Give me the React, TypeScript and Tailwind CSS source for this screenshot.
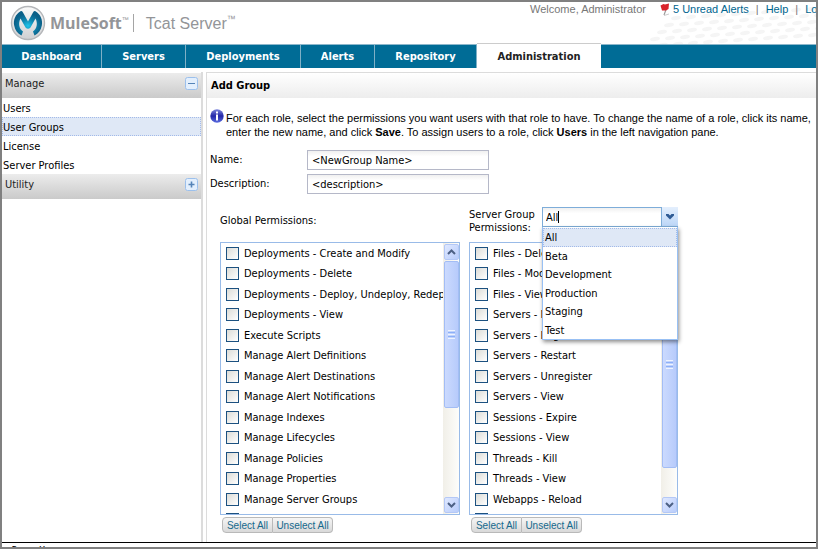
import type { ReactNode } from "react";

const tahoma = "font-['DejaVu_Sans_Condensed','DejaVu_Sans',sans-serif]";
const arial = "font-['Liberation_Sans',Arial,sans-serif]";

const tabs = [
  { name: "Dashboard", width: "w-[100px]" },
  { name: "Servers", width: "w-[84px]" },
  { name: "Deployments", width: "w-[115px]" },
  { name: "Alerts", width: "w-[74px]" },
  { name: "Repository", width: "w-[102px]" },
];

const globalPermissions = [
  "Deployments - Create and Modify",
  "Deployments - Delete",
  "Deployments - Deploy, Undeploy, Redep",
  "Deployments - View",
  "Execute Scripts",
  "Manage Alert Definitions",
  "Manage Alert Destinations",
  "Manage Alert Notifications",
  "Manage Indexes",
  "Manage Lifecycles",
  "Manage Policies",
  "Manage Properties",
  "Manage Server Groups",
  "",
];

const serverPermissions = [
  "Files - Delete",
  "Files - Modify",
  "Files - View",
  "Servers - Modify",
  "Servers - Register",
  "Servers - Restart",
  "Servers - Unregister",
  "Servers - View",
  "Sessions - Expire",
  "Sessions - View",
  "Threads - Kill",
  "Threads - View",
  "Webapps - Reload",
  "",
];

const serverGroups = ["All", "Beta", "Development", "Production", "Staging", "Test"];

function Logo() {
  return (
    <svg viewBox="0 0 36 36" className="size-9 shrink-0" aria-label="MuleSoft logo">
      <defs>
        <linearGradient id="rim" x1="0" y1="0" x2="0" y2="1">
          <stop offset="0" stopColor="#fafafa" />
          <stop offset="1" stopColor="#cfd0d2" />
        </linearGradient>
        <radialGradient id="ink" cx="0.5" cy="0.6" r="0.5">
          <stop offset="0" stopColor="#1fc4ea" />
          <stop offset="0.5" stopColor="#0f86b0" />
          <stop offset="1" stopColor="#0b6088" />
        </radialGradient>
      </defs>
      <circle cx="18" cy="18" r="16.5" fill="url(#rim)" stroke="#b4b6b9" strokeWidth="1.4" />
      <path
        d="M10.500 6.200C5.500 9 3 15 4.200 20.500C5 25 7.500 28.500 11.500 30.500L13 26.500C9 23.500 8 18.500 10.500 13.500L15.500 22.500Q18 25 20.500 22.500L25.500 13.500C28 18.500 27 23.500 23 26.500L24.500 30.500C28.500 28.500 31 25 31.800 20.500C33 15 30.500 9 25.500 6.200Q24 5.800 23 7.500L18 16.500L13 7.500Q12 5.800 10.500 6.200Z"
        fill="url(#ink)"
      />
    </svg>
  );
}

function Flag() {
  return (
    <svg viewBox="0 0 10 13" className="mr-[3px] h-[13px] w-[10px]" aria-hidden="true">
      <path d="M7 4L4 12" stroke="#999" strokeWidth="1.200" />
      <path d="M4 12.500L9 11" stroke="#ccc" strokeWidth="1" />
      <path d="M0.500 2.500L3.500 1L5 1.500L9 0.500L8.500 6L6 7.500L2 7.500Z" fill="#d8232a" />
    </svg>
  );
}

function InfoIcon() {
  return (
    <svg viewBox="0 0 14 14" className="size-[14px] shrink-0" aria-hidden="true">
      <defs>
        <linearGradient id="info" x1="0" y1="0" x2="0" y2="1">
          <stop offset="0" stopColor="#7d86dc" />
          <stop offset="0.5" stopColor="#2327a8" />
          <stop offset="1" stopColor="#5b6ce0" />
        </linearGradient>
      </defs>
      <circle cx="7" cy="7" r="6.700" fill="url(#info)" />
      <rect x="6" y="2.500" width="2" height="2" fill="#fff" />
      <rect x="6" y="5.500" width="2" height="6" fill="#fff" />
    </svg>
  );
}

function SectionHeader({ title, open }: { title: string; open: boolean }) {
  return (
    <h2>
      <button
        type="button"
        aria-expanded={open}
        className="flex h-[25px] w-full items-start justify-between bg-linear-to-b from-[#ececec] to-[#cacaca] pt-[3px] pr-[3px] pl-[3px] text-left text-[#222]"
      >
        <span className="leading-[15px]">{title}</span>
        <svg viewBox="0 0 13 13" className="mt-px size-[13px]" aria-hidden="true">
          <rect x="0.5" y="0.5" width="12" height="12" rx="2" fill="#e3effd" stroke="#9cc0ec" />
          <path d={open ? "M3 6.500H10" : "M3.500 6.500H9.500M6.500 3.500V9.500"} stroke="#5584b8" strokeWidth={open ? 1 : 1.6} />
        </svg>
      </button>
    </h2>
  );
}

function ScrollArrow({ up }: { up?: boolean }) {
  return (
    <button
      type="button"
      aria-label={up ? "Scroll up" : "Scroll down"}
      className="flex h-4 w-full shrink-0 items-center justify-center rounded-xs border border-[#b4c8f6] bg-linear-to-br from-[#dfe8ff] to-[#b9cdfb]"
    >
      <svg viewBox="0 0 9 6" className="h-[6px] w-[9px]" aria-hidden="true">
        <path d={up ? "M1 5L4.500 1.500L8 5" : "M1 1L4.500 4.500L8 1"} fill="none" stroke="#4d6185" strokeWidth="2" />
      </svg>
    </button>
  );
}

function PermissionList({ id, items, thumb }: { id: string; items: string[]; thumb: string }) {
  return (
    <div className="flex h-[273px] border border-[#99bbe8] bg-white">
      <ul className="min-w-0 flex-1 overflow-hidden pl-[5px]">
        {items.map((item, i) => (
          <li key={item} className="flex items-center odd:h-5 even:h-[21px]">
            <input
              id={`${id}-${i}`}
              type="checkbox"
              className="size-[13px] shrink-0 appearance-none border border-[#1c5180] bg-linear-to-br from-[#dcdcd7] to-white"
            />
            <label htmlFor={`${id}-${i}`} className="ml-[5px] whitespace-nowrap">
              {item}
            </label>
          </li>
        ))}
      </ul>
      <div className="flex w-4 shrink-0 flex-col bg-linear-to-r from-[#f1efe8] to-[#fdfdfb] py-px pl-px">
        <ScrollArrow up />
        <div className="flex-1 pt-px">
          <div
            className={`flex flex-col items-center justify-center gap-px rounded-xs border border-[#a3bdf5] bg-linear-to-r from-[#cbdafe] to-[#b7cbfb] ${thumb}`}
          >
            <i className="h-px w-[7px] bg-[#eef4fe]" />
            <i className="h-px w-[7px] bg-[#8cb0f8]" />
            <i className="h-px w-[7px] bg-[#eef4fe]" />
            <i className="h-px w-[7px] bg-[#8cb0f8]" />
            <i className="h-px w-[7px] bg-[#eef4fe]" />
          </div>
        </div>
        <ScrollArrow />
      </div>
    </div>
  );
}

function SelectButtons() {
  const shade = "h-4 border border-[#b9b9b9] bg-linear-to-b from-[#f6f6f6] to-[#d9d9d9] text-center leading-[13px]";
  return (
    <div className={`mt-[2px] ml-[2px] flex text-[10px] text-[#15698c] ${arial}`}>
      <button type="button" className={`w-[51px] rounded-l ${shade}`}>Select All</button>
      <button type="button" className={`w-[60px] rounded-r border-l-0 ${shade}`}>Unselect All</button>
    </div>
  );
}

function Field({ id, label, value }: { id: string; label: string; value: string }) {
  return (
    <div className="flex h-6 items-start">
      <label htmlFor={id} className="w-[97px] pt-[3px]">{label}</label>
      <input
        id={id}
        defaultValue={value}
        className="h-5 w-[182px] border border-[#b5b8c8] bg-linear-to-b from-[#f0f0f0] to-white to-30% px-1"
      />
    </div>
  );
}

function HeaderLink({ children }: { children: ReactNode }) {
  return <a href="#" className="text-[#00658f]">{children}</a>;
}

function GroupSelect() {
  return (
    <div className="relative w-[136px]">
      <div className="flex h-5">
        <input
          id="server-group"
          role="combobox"
          aria-expanded="true"
          aria-controls="server-group-list"
          defaultValue="All"
          className="min-w-0 flex-1 border border-[#7eadd9] bg-linear-to-b from-[#f0f0f0] to-white to-30% px-[3px]"
        />
        <button
          type="button"
          aria-label="Show server groups"
          className="flex w-4 items-center justify-center border-b border-[#7eadd9] bg-linear-to-b from-[#e4effd] to-[#bcd6f7]"
        >
          <svg viewBox="0 0 8 6" className="h-[6px] w-2" aria-hidden="true">
            <path d="M0 0H2.500L4 1.500L5.500 0H8V1.500L4 5.500L0 1.500Z" fill="#2f5b94" />
          </svg>
        </button>
      </div>
      <span className="absolute top-1 left-4 h-3 w-px bg-black" />
      <ul
        id="server-group-list"
        role="listbox"
        className="absolute top-5 left-0 z-10 w-full border border-t-0 border-[#98c0f4] bg-white pt-px shadow-[1px_2px_4px_rgba(0,0,0,0.45)]"
      >
        {serverGroups.map((group, i) => (
          <li
            key={group}
            role="option"
            aria-selected={i === 0}
            className="flex items-center border border-transparent px-px odd:h-[19px] even:h-[18px] aria-selected:border-dotted aria-selected:border-[#a3bae9] aria-selected:bg-[#dfe8f6]"
          >
            {group}
          </li>
        ))}
      </ul>
    </div>
  );
}

export default function App() {
  return (
    <div className={`flex h-screen flex-col overflow-hidden border-2 border-[#808080] bg-white text-[11px] leading-[13px] text-black ${tahoma}`}>
      <header className={`flex h-[42px] shrink-0 ${arial}`}>
        <div className="flex w-[240px] shrink-0 items-center pl-2 text-[#939598]">
          <Logo />
          <span className="ml-1 font-['Open_Sans',sans-serif] text-[16px] font-bold">MuleSoft</span>
          <sup className="text-[7px]">™</sup>
          <span className="ml-1 h-[18px] w-px bg-[#a5a5a5]" />
          <span className="ml-3 text-[16px]">Tcat Server</span>
          <sup className="text-[9px]">™</sup>
        </div>
        <div className="relative min-w-0 flex-1 overflow-hidden">
          <svg viewBox="0 0 180 42" className="absolute right-0 h-[42px] w-[180px]" aria-hidden="true">
            <g fill="#f5f5f5">
              {[0, 1, 2, 3, 4].map((r) =>
                Array.from({ length: 12 }, (_, c) => (
                  <ellipse key={`${r}-${c}`} cx={12 + c * 15 + r * 7} cy={44 - r * 7 - c} rx="5" ry="2" transform={`rotate(-8 ${12 + c * 15 + r * 7} ${44 - r * 7 - c})`} />
                )),
              )}
            </g>
          </svg>
          <div className="absolute top-0 left-[288px] flex h-[14px] items-center whitespace-nowrap text-[#777]">
            <span className="mr-[14px]">Welcome, Administrator</span>
            <Flag />
            <HeaderLink>5 Unread Alerts</HeaderLink>
            <span className="mx-[7px]">|</span>
            <HeaderLink>Help</HeaderLink>
            <span className="mx-[7px]">|</span>
            <HeaderLink>Logout</HeaderLink>
          </div>
        </div>
      </header>

      <nav className="flex h-6 shrink-0 border-t border-[#8db7cb] bg-[#006c96] font-bold text-white">
        {tabs.map((tab) => (
          <a key={tab.name} href="#" className={`flex shrink-0 items-center justify-center border-r border-[#7fb0c6] ${tab.width}`}>
            {tab.name}
          </a>
        ))}
        <a href="#" aria-current="page" className="-mt-[2px] flex w-[124px] shrink-0 items-center justify-center border-t border-[#ccc] bg-white pt-px text-[#222]">
          Administration
        </a>
      </nav>

      <div className="flex min-h-0 flex-1 pt-1">
        <aside className="flex w-[201px] shrink-0 flex-col border-r-2 border-[#dcdcdc] pt-px">
          <SectionHeader title="Manage" open />
          <ul>
            {["Users", "User Groups", "License", "Server Profiles"].map((item) => (
              <li key={item}>
                <a
                  href="#"
                  aria-current={item === "User Groups" ? "true" : undefined}
                  className="flex h-[19px] items-center border border-transparent pt-[2px] aria-[current]:border-dotted aria-[current]:border-[#a3bae9] aria-[current]:bg-[#dfe8f6]"
                >
                  {item}
                </a>
              </li>
            ))}
          </ul>
          <SectionHeader title="Utility" open={false} />
        </aside>

        <main className="ml-[3px] min-w-0 flex-1 overflow-hidden border-t border-l border-[#dcdcdc]">
          <h1 className="flex h-[25px] items-center bg-linear-to-b from-white to-[#ededed] pl-1 font-bold">
            Add Group
          </h1>
          <div className="pl-[3px]">
            <div className={`mt-[11px] flex gap-[2px] leading-[14px] whitespace-nowrap ${arial}`}>
              <InfoIcon />
              <p className="pt-[2px]">
                For each role, select the permissions you want users with that role to have. To change the name of a role, click its name,
                <br />
                enter the new name, and click <b>Save</b>. To assign users to a role, click <b>Users</b> in the left navigation pane.
              </p>
            </div>
            <div className="mt-[11px]">
              <Field id="name" label="Name:" value="<NewGroup Name>" />
              <Field id="description" label="Description:" value="<description>" />
            </div>
            <div className="mt-[9px] ml-[10px] flex gap-[9px]">
              <section className="w-[240px]">
                <h3 className="h-[35px] pt-[7px]">Global Permissions:</h3>
                <PermissionList id="global" items={globalPermissions} thumb="h-[147px]" />
                <SelectButtons />
              </section>
              <section className="w-[209px]">
                <div className="flex h-[35px]">
                  <label htmlFor="server-group" className="w-[73px] pt-px">
                    Server Group Permissions:
                  </label>
                  <GroupSelect />
                </div>
                <PermissionList id="server" items={serverPermissions} thumb="h-[207px]" />
                <SelectButtons />
              </section>
            </div>
          </div>
        </main>
      </div>

      <footer className={`h-[5px] shrink-0 overflow-hidden border-t border-black pl-[10px] text-[7px] leading-[8px] ${arial}`}>
        <p className="pt-[2px] font-bold">Powered by</p>
      </footer>
    </div>
  );
}
